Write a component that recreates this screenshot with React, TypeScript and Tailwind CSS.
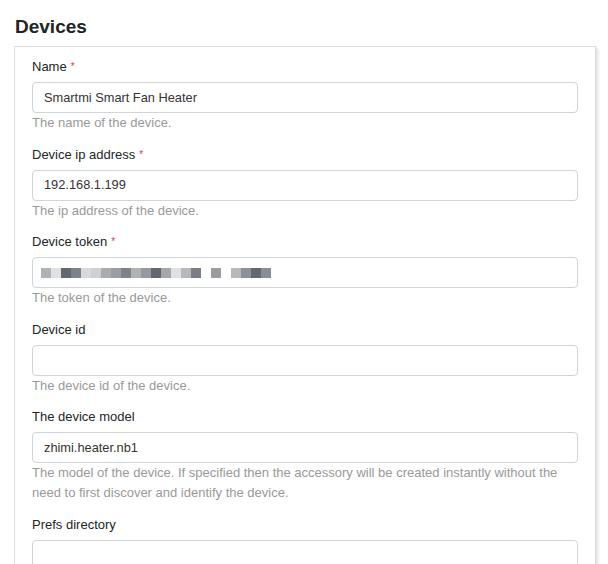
const token: (string | null)[] = [
  "#b0b2b5", "#e0e1e3", "#626770", "#7d8288", "#d8d9db", "#cfd0d2", "#a9abae", "#9a9da1",
  "#7f8388", "#b0b3b6", "#96999d", "#626670", "#a5a8ab", "#e0e1e3", "#b6b8bb", "#7b7f85",
  null, "#999b9f", null, "#b6b8bb", "#8d9095", "#636770", "#8a8d92",
];

function Field({
  label,
  required,
  value,
  help,
  children,
}: {
  label: string;
  required?: boolean;
  value?: string;
  help?: string;
  children?: React.ReactNode;
}) {
  return (
    <div className="mb-[11.5px]">
      <label className="block text-[13px] leading-5 text-[#212529]">
        {label}
        {required && <span className="ml-1 align-top text-[10px] text-[#e0393e]">*</span>}
      </label>
      <div className="mt-[5px] flex h-[31px] items-center rounded-[4px] border border-[#ced4da] bg-white px-[11px] text-[12.8px] text-[#333]">
        {children ?? value}
      </div>
      {help && <p className="text-[13px] leading-5 text-[#999]">{help}</p>}
    </div>
  );
}

export default function App() {
  return (
    <div className="h-[564px] w-[608px] overflow-hidden bg-white pl-[14px] pt-[15px] font-['Liberation_Sans',Arial,sans-serif]">
      <h2 className="mb-[7px] pl-px text-[19px] font-bold leading-[24px] text-[#222]">Devices</h2>
      <div className="w-[582px] border border-[#ddd] bg-white px-[17px] pt-[10px] shadow-[2px_2px_3px_rgba(0,0,0,0.13)]">
        <Field label="Name" required value="Smartmi Smart Fan Heater" help="The name of the device." />
        <Field label="Device ip address" required value="192.168.1.199" help="The ip address of the device." />
        <Field label="Device token" required help="The token of the device.">
          <div className="-ml-[3px] flex">
            {token.map((c, i) =>
              c ? (
                <span key={i} className="h-[10px] w-[10px]" style={{ backgroundColor: c }} />
              ) : (
                <span key={i} className="h-[10px] w-[10px]" />
              )
            )}
          </div>
        </Field>
        <Field label="Device id" help="The device id of the device." />
        <Field
          label="The device model"
          value="zhimi.heater.nb1"
          help="The model of the device. If specified then the accessory will be created instantly without the need to first discover and identify the device."
        />
        <Field label="Prefs directory" />
      </div>
    </div>
  );
}
